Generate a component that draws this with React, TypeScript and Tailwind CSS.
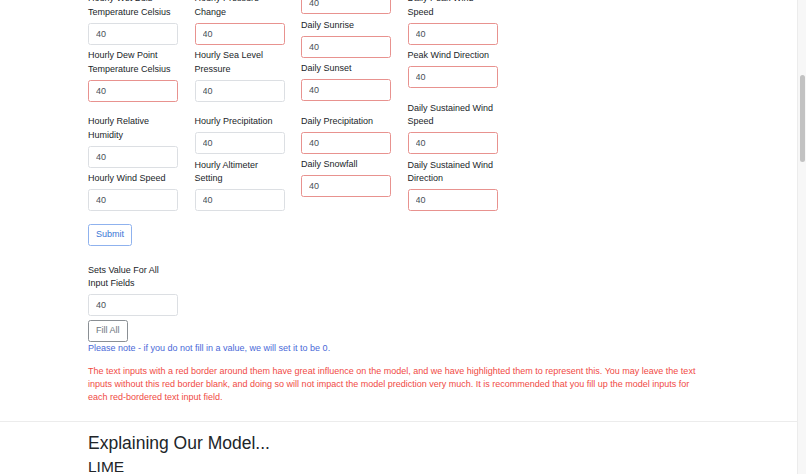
import React from "react";

type Field = {
  label?: string;
  red?: boolean;
  gap?: "none" | "small" | "big";
};

const columns: Field[][] = [
  [
    { label: "Hourly Wet Bulb Temperature Celsius", gap: "none" },
    { label: "Hourly Dew Point Temperature Celsius", red: true },
    { label: "Hourly Relative Humidity", gap: "big" },
    { label: "Hourly Wind Speed" },
  ],
  [
    { label: "Hourly Pressure Change", red: true, gap: "none" },
    { label: "Hourly Sea Level Pressure" },
    { label: "Hourly Precipitation", gap: "big" },
    { label: "Hourly Altimeter Setting" },
  ],
  [
    { red: true, gap: "none" },
    { label: "Daily Sunrise", red: true },
    { label: "Daily Sunset", red: true },
    { label: "Daily Precipitation", red: true, gap: "big" },
    { label: "Daily Snowfall", red: true },
  ],
  [
    { label: "Daily Peak Wind Speed", red: true, gap: "none" },
    { label: "Peak Wind Direction", red: true },
    { label: "Daily Sustained Wind Speed", red: true, gap: "big" },
    { label: "Daily Sustained Wind Direction", red: true },
  ],
];

function TextInput({ red }: { red?: boolean }) {
  return (
    <input
      type="text"
      defaultValue="40"
      className={`block h-[22px] w-[90px] rounded-[2.5px] border bg-white px-[7px] text-[9px] text-[#495057] outline-none ${
        red ? "border-[#e8928f]" : "border-[#dcdfe3]"
      }`}
    />
  );
}

function FormField({ field }: { field: Field }) {
  const gap =
    field.gap === "none" ? "" : field.gap === "big" ? "mt-[13.5px]" : "mt-[4.5px]";
  return (
    <div className={gap}>
      {field.label && (
        <label className="mb-[3.5px] block text-[9px] leading-[13.5px] text-[#212529]">
          {field.label}
        </label>
      )}
      <TextInput red={field.red} />
    </div>
  );
}

export default function App() {
  return (
    <div
      className="flex h-[474px] w-[806px] overflow-hidden bg-white"
      style={{ fontFamily: '"Liberation Sans", Arial, sans-serif' }}
    >
      <div className="min-w-0 flex-1">
        <div className="w-[710px] pl-[88px]">
          {/* page is scrolled: first row of labels sits above the fold */}
          <div className="-mt-[8px] grid grid-cols-[90px_90px_90px_90px] items-start gap-x-[16.5px]">
            {columns.map((col, i) => (
              <div key={i} className="flex flex-col">
                {col.map((f, j) => (
                  <FormField key={j} field={f} />
                ))}
              </div>
            ))}
          </div>

          <button className="mt-[13px] h-[21.5px] rounded-[2.5px] border border-[#8fb2ee] bg-white px-[7px] text-[9px] text-[#3a76d6]">
            Submit
          </button>

          <label className="mt-[18px] block w-[90px] text-[9px] leading-[13.5px] text-[#212529]">
            Sets Value For All Input Fields
          </label>
          <div className="mt-[3.5px]">
            <TextInput />
          </div>
          <button className="mt-[4px] h-[21.5px] rounded-[2.5px] border border-[#8a8f94] bg-white px-[7px] text-[9px] text-[#6c757d]">
            Fill All
          </button>
          <p className="text-[9px] leading-[13.5px] text-[#4a69d8]">
            Please note - if you do not fill in a value, we will set it to be 0.
          </p>
          <p className="mt-[9.5px] text-[9px] leading-[13.3px] text-[#f04a45]">
            The text inputs with a red border around them have great influence on the model, and we
            have highlighted them to represent this. You may leave the text inputs without this red
            border blank, and doing so will not impact the model prediction very much. It is
            recommended that you fill up the model inputs for each red-bordered text input field.
          </p>
        </div>

        <div className="mt-[17px] border-t border-[#ececec] pl-[88px] pt-[11px]">
          <h2 className="text-[17.5px] font-medium leading-[21px] text-[#212529]">
            Explaining Our Model...
          </h2>
          <h3 className="mt-[3px] text-[15.5px] font-medium leading-[19px] text-[#212529]">
            LIME
          </h3>
        </div>
      </div>

      <div className="flex w-[9px] flex-col items-center border-l border-[#ececec] bg-[#f7f7f7] pt-[75px]">
        <div className="h-[87px] w-[5px] rounded-full bg-[#c2c2c2]" />
      </div>
    </div>
  );
}
